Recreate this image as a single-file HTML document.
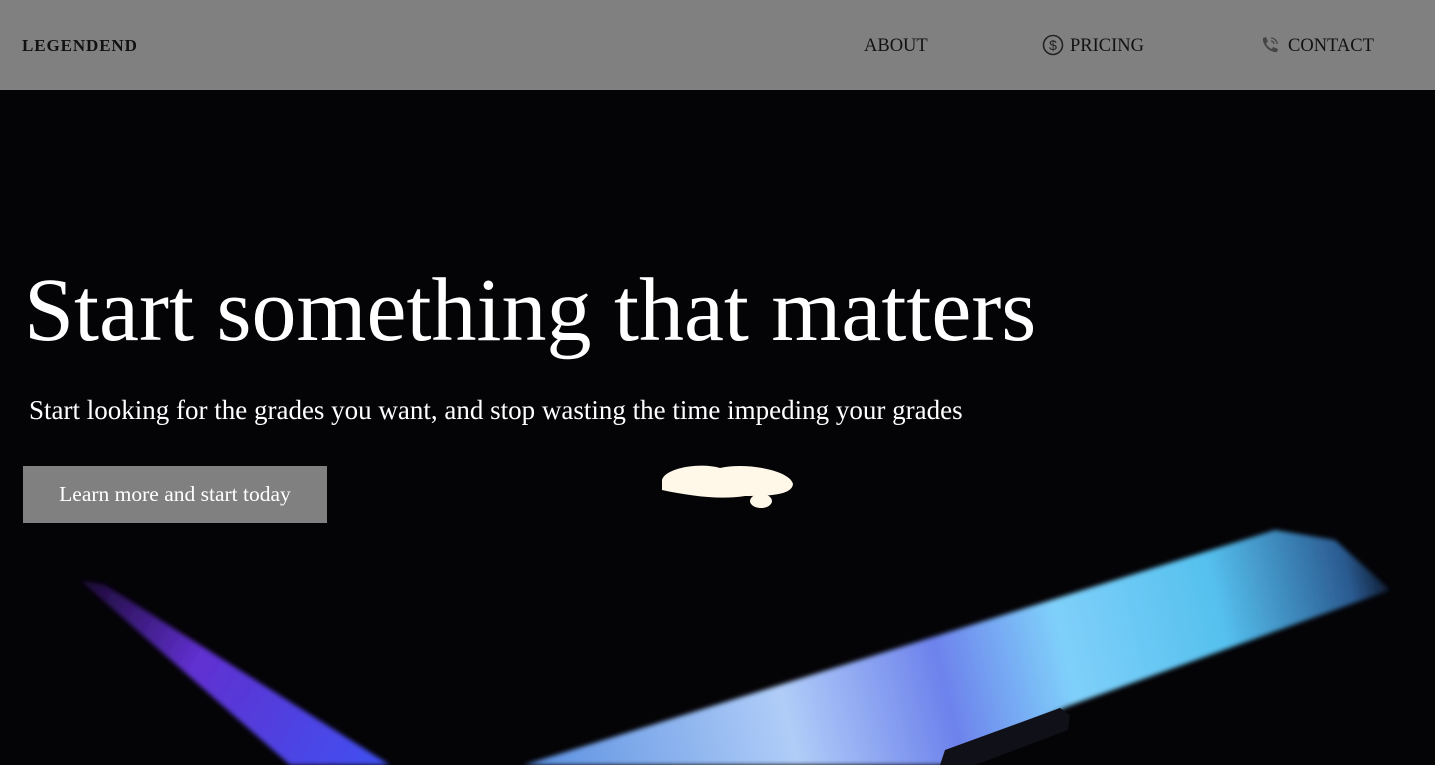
<!DOCTYPE html>
<html><head><style>
body{margin:0;width:1435px;height:765px;overflow:hidden;background:#040306;font-family:"Liberation Serif",serif;position:relative}
.nav{position:absolute;left:0;top:0;width:1435px;height:90px;background:#808080;color:#111}
.nav span{position:absolute;top:36px;font-size:18.5px}
h1{position:absolute;left:24px;top:261px;margin:0;font-weight:normal;font-size:90px;color:#fff;line-height:1.1}
p{position:absolute;left:29px;top:395px;margin:0;font-size:27px;color:#fff}
.btn{position:absolute;left:23px;top:466px;width:304px;height:57px;background:#808080;color:#fff;font-size:21.5px;text-align:center;line-height:57px}
svg.bg{position:absolute;left:0;top:0}
</style></head><body>
<svg class="bg" width="1435" height="765">
<defs>
<linearGradient id="k" x1="524" y1="765" x2="1390" y2="560" gradientUnits="userSpaceOnUse">
<stop offset="0" stop-color="#5a8fe0"/><stop offset="0.3" stop-color="#b0cdf8"/><stop offset="0.48" stop-color="#6d82ec"/><stop offset="0.62" stop-color="#7fd0fa"/><stop offset="0.8" stop-color="#55c0ee"/><stop offset="0.95" stop-color="#2a5a90"/><stop offset="1" stop-color="#0a1020"/></linearGradient>
<linearGradient id="p" x1="80" y1="580" x2="380" y2="765" gradientUnits="userSpaceOnUse">
<stop offset="0" stop-color="#1a0830"/><stop offset="0.4" stop-color="#6030d0"/><stop offset="1" stop-color="#4050f0"/></linearGradient>
<filter id="b"><feGaussianBlur stdDeviation="2.5"/></filter>
</defs>
<polygon points="524,765 1275,530 1335,540 1390,590 1066,707 947,765" fill="url(#k)" filter="url(#b)"/>
<polygon points="945,750 1060,708 1070,715 1068,730 975,765 940,765" fill="#101018"/>
<polygon points="80,580 105,585 390,765 290,765" fill="url(#p)" filter="url(#b)"/>
<path d="M662,480 C665,468 700,462 720,468 C745,462 790,470 793,484 C792,495 770,496 745,496 C720,500 690,496 662,490 Z" fill="#fff8e8"/>
<ellipse cx="761" cy="501" rx="11" ry="7" fill="#fff8e8"/>
</svg>
<div class="nav">
<span style="left:22px;font-weight:bold;font-size:17px;top:36px;letter-spacing:0.9px">LEGENDEND</span>
<span style="left:864px">ABOUT</span>
<svg style="position:absolute;left:1042px;top:34px" width="22" height="22" viewBox="0 0 22 22"><circle cx="11" cy="11" r="9.5" fill="none" stroke="#222" stroke-width="1.6"/><text x="11" y="16" font-size="14" text-anchor="middle" fill="#222" font-family="Liberation Sans">$</text></svg>
<span style="left:1070px">PRICING</span>
<svg style="position:absolute;left:1260px;top:35px" width="20" height="20" viewBox="0 0 20 20"><path d="M3,3 L6,2 L8,7 L6,8 C7,11 9,13 12,14 L13,12 L18,14 L17,17 C10,18 2,10 3,3 Z" fill="#444"/><path d="M11,3 A6,6 0 0 1 17,9 M11,6 A3,3 0 0 1 14,9" fill="none" stroke="#444" stroke-width="1.3"/></svg>
<span style="left:1288px">CONTACT</span>
</div>
<h1>Start something that matters</h1>
<p>Start looking for the grades you want, and stop wasting the time impeding your grades</p>
<div class="btn">Learn more and start today</div>
</body></html>
